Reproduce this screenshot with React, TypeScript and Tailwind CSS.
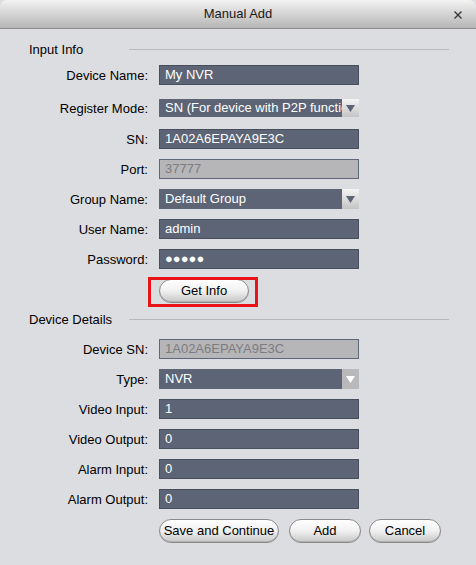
import React from 'react'

const font = { fontFamily: '"Liberation Sans", Arial, sans-serif' }

function Label({ children }: { children: React.ReactNode }) {
  return <div className="w-[149px] shrink-0 pr-[1px] text-right text-[13px] leading-none text-black">{children}</div>
}

function TextBox({ value, disabled }: { value: string; disabled?: boolean }) {
  return (
    <div
      className={
        disabled
          ? 'ml-[10px] flex h-[20px] w-[200px] items-center border border-[#5f6677] bg-[#b6b6b8] pl-[5px] text-[13px] text-[#7c7c80]'
          : 'ml-[10px] flex h-[20px] w-[200px] items-center border border-[#474e5e] bg-[#5c6475] pl-[5px] text-[13px] text-white'
      }
    >
      {value}
    </div>
  )
}

function Select({ value, h = 20, lightArrow }: { value: string; h?: number; lightArrow?: boolean }) {
  return (
    <div
      className={`ml-[10px] flex w-[200px] items-stretch bg-[#5c6475] text-[13px] text-white ${h === 18 ? 'h-[18px]' : 'h-[20px]'}`}
    >
      <div className="flex min-w-0 flex-1 items-center overflow-hidden whitespace-nowrap pl-[6px]">
        <span className="block overflow-hidden">{value}</span>
      </div>
      <div
        className={
          lightArrow
            ? 'flex w-[17px] items-center justify-center bg-[#b9b9bc]'
            : 'flex w-[17px] items-center justify-center bg-gradient-to-b from-[#f4f4f4] to-[#c4c4c6]'
        }
      >
        <svg width="9" height="7" viewBox="0 0 9 7">
          <path d="M0 0 H9 L4.5 7 Z" fill={lightArrow ? '#ffffff' : '#5c6475'} />
        </svg>
      </div>
    </div>
  )
}

function Row({ label, children, className = 'mt-[10px]' }: { label: string; children: React.ReactNode; className?: string }) {
  return (
    <div className={`flex items-center ${className}`}>
      <Label>{label}</Label>
      {children}
    </div>
  )
}

function PillButton({ children, w }: { children: React.ReactNode; w: string }) {
  return (
    <button
      className={`flex h-[24px] shrink-0 items-center justify-center rounded-full border border-[#8a8a8a] bg-gradient-to-b from-[#ffffff] via-[#f0f0f0] to-[#c8c8c8] text-[13px] text-black shadow-[inset_0_-1px_0_#b0b0b0] ${w}`}
    >
      {children}
    </button>
  )
}

function Section({ title }: { title: string }) {
  return (
    <div className="flex h-[14px] items-center">
      <div className="w-[100px] shrink-0 whitespace-nowrap pl-[29px] text-[13px] leading-none text-black">{title}</div>
      <div className="ml-[29px] h-px w-[320px] bg-[#b9babe]" />
    </div>
  )
}

export default function App() {
  return (
    <div style={font} className="h-[565px] w-[476px] overflow-hidden bg-[#dcdde1]">
      <div className="flex h-[565px] flex-col overflow-hidden rounded-t-[7px] rounded-b-[6px] bg-[#dcdde1]">
        <div className="relative flex h-[29px] shrink-0 items-center justify-center border-b border-[#8c8c8c] bg-gradient-to-b from-[#f3f3f3] to-[#b6b6b6]">
          <span className="text-[13px] text-[#1a1a1a]">Manual Add</span>
          <svg className="absolute right-[14px] top-[11px]" width="8" height="8" viewBox="0 0 8 8">
            <path d="M0.5 0.5 L7.5 7.5 M7.5 0.5 L0.5 7.5" stroke="#333333" strokeWidth="1.3" />
          </svg>
        </div>

        <div className="pt-[13px]">
          <Section title="Input Info" />
          <Row label="Device Name:" className="mt-[9px]">
            <TextBox value="My NVR" />
          </Row>
          <Row label="Register Mode:" className="mt-[14px]">
            <Select value="SN (For device with P2P function)" h={18} />
          </Row>
          <Row label="SN:" className="mt-[12px]">
            <TextBox value="1A02A6EPAYA9E3C" />
          </Row>
          <Row label="Port:">
            <TextBox value="37777" disabled />
          </Row>
          <Row label="Group Name:">
            <Select value="Default Group" />
          </Row>
          <Row label="User Name:">
            <TextBox value="admin" />
          </Row>
          <Row label="Password:">
            <TextBox value="●●●●●" />
          </Row>
          <div className="mt-[10px] flex pl-[159px]">
            <div className="relative">
              <PillButton w="w-[90px]">Get Info</PillButton>
              <div className="pointer-events-none absolute left-[-11px] top-[-2px] h-[30px] w-[110px] border-[3px] border-[#e8141a]" />
            </div>
          </div>

          <div className="mt-[9px]">
            <Section title="Device Details" />
          </div>
          <Row label="Device SN:" className="mt-[13px]">
            <TextBox value="1A02A6EPAYA9E3C" disabled />
          </Row>
          <Row label="Type:">
            <Select value="NVR" lightArrow />
          </Row>
          <Row label="Video Input:">
            <TextBox value="1" />
          </Row>
          <Row label="Video Output:">
            <TextBox value="0" />
          </Row>
          <Row label="Alarm Input:">
            <TextBox value="0" />
          </Row>
          <Row label="Alarm Output:">
            <TextBox value="0" />
          </Row>
          <div className="mt-[10px] flex pl-[159px]">
            <PillButton w="w-[120px]">Save and Continue</PillButton>
            <div className="ml-[10px]">
              <PillButton w="w-[72px]">Add</PillButton>
            </div>
            <div className="ml-[8px]">
              <PillButton w="w-[72px]">Cancel</PillButton>
            </div>
          </div>
        </div>
      </div>
    </div>
  )
}
